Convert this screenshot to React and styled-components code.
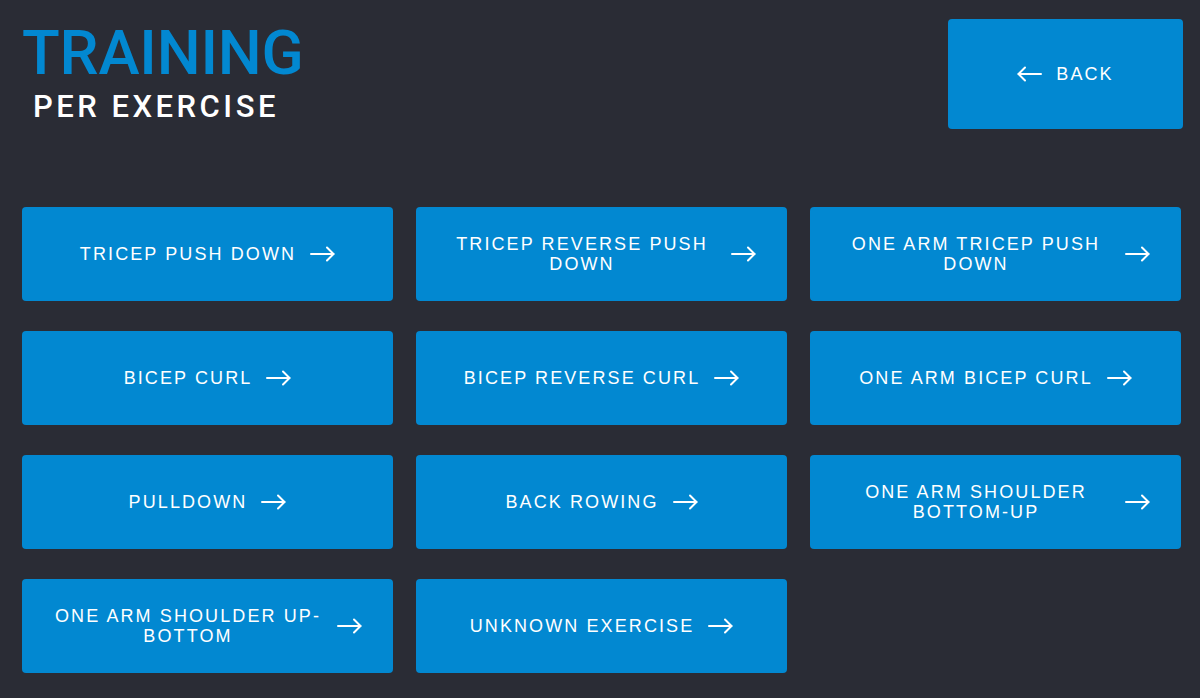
import React from "react";
import styled, { createGlobalStyle } from "styled-components";

const GlobalStyle = createGlobalStyle`
  html, body {
    margin: 0;
    padding: 0;
    background: #2a2c35;
  }
  body {
    font-family: "Liberation Sans", Arial, sans-serif;
  }
`;

const Page = styled.div`
  box-sizing: border-box;
  width: 1200px;
  min-height: 698px;
  padding: 19px 17px 0 22px;
  background: #2a2c35;
`;

const Header = styled.header`
  display: flex;
  justify-content: space-between;
  align-items: flex-start;
`;

const TitleBlock = styled.div`
  display: flex;
  flex-direction: column;
  padding-top: 3px;
  font-family: Roboto, "Noto Sans", sans-serif;
`;

const Title = styled.h1`
  margin: 0;
  font-size: 62px;
  line-height: 62px;
  font-weight: 500;
  color: #0288d1;
  letter-spacing: -0.2px;
`;

const Subtitle = styled.h2`
  margin: 7px 0 0 11px;
  font-size: 31px;
  line-height: 31px;
  font-weight: 500;
  color: #ffffff;
  letter-spacing: 3.5px;
`;

const BaseButton = styled.button`
  box-sizing: border-box;
  display: flex;
  align-items: center;
  justify-content: center;
  border: none;
  border-radius: 4px;
  background: #0288d1;
  color: #ffffff;
  font-family: "Liberation Sans", Arial, sans-serif;
  font-size: 18px;
  line-height: 20px;
  letter-spacing: 2.1px;
  text-transform: uppercase;
  cursor: pointer;
  gap: 14px;
`;

const BackButton = styled(BaseButton)`
  width: 235px;
  height: 110px;
  padding: 0;
`;

const Grid = styled.div`
  display: grid;
  grid-template-columns: repeat(3, 371px);
  grid-auto-rows: 93.5px;
  column-gap: 23px;
  row-gap: 30.5px;
  margin-top: 78px;
`;

const ExerciseButton = styled(BaseButton)`
  width: 100%;
  height: 100%;
  padding: 0 31px;
`;

const Label = styled.span`
  text-align: center;
  flex: 0 1 auto;
`;

const Arrow = ({ dir = "right" }) => (
  <svg
    width="25"
    height="16"
    viewBox="0 0 25 16"
    fill="none"
    stroke="#ffffff"
    strokeWidth="2"
    strokeLinecap="round"
    strokeLinejoin="round"
    style={{ flex: "none", transform: dir === "left" ? "scaleX(-1)" : undefined }}
  >
    <path d="M1 8 H23.5" />
    <path d="M17 1.5 L23.5 8 L17 14.5" />
  </svg>
);

const exercises = [
  "Tricep push down",
  "Tricep reverse push down",
  "One arm tricep push down",
  "Bicep curl",
  "Bicep reverse curl",
  "One arm bicep curl",
  "Pulldown",
  "Back rowing",
  "One arm shoulder bottom-up",
  "One arm shoulder up-bottom",
  "Unknown exercise",
];

export default function App() {
  return (
    <>
      <GlobalStyle />
      <Page>
        <Header>
          <TitleBlock>
            <Title>TRAINING</Title>
            <Subtitle>PER EXERCISE</Subtitle>
          </TitleBlock>
          <BackButton>
            <Arrow dir="left" />
            <span>Back</span>
          </BackButton>
        </Header>
        <Grid>
          {exercises.map((name) => (
            <ExerciseButton key={name}>
              <Label>{name}</Label>
              <Arrow />
            </ExerciseButton>
          ))}
        </Grid>
      </Page>
    </>
  );
}
